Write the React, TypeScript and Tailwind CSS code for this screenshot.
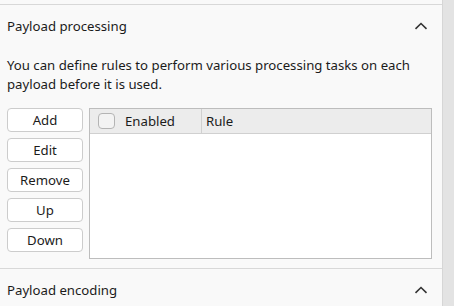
import React from "react";

const buttons = ["Add", "Edit", "Remove", "Up", "Down"];

function Chevron() {
  return (
    <svg width="14" height="8" viewBox="0 0 14 8" className="shrink-0">
      <path d="M1.5 6.8 L7 1.5 L12.5 6.8" fill="none" stroke="#333333" strokeWidth="1.6" />
    </svg>
  );
}

function SectionHeader({ title }: { title: string }) {
  return (
    <div className="flex h-[42px] items-center justify-between pl-[7px] pr-[14px]">
      <span className="pt-[2px]">{title}</span>
      <Chevron />
    </div>
  );
}

export default function App() {
  return (
    <div
      className="flex h-[306px] w-[454px] overflow-hidden bg-[#f9f9f9] text-[13.2px] text-[#1b1b1b]"
      style={{ fontFamily: '"Noto Sans", "Open Sans", sans-serif' }}
    >
      <div className="flex w-[442px] flex-col pt-1">
        <section className="border-t border-[#d8d8d8]">
          <SectionHeader title="Payload processing" />
          <div className="pl-[7px] pr-[10px]">
            <p className="mt-[9px] leading-[19px]">
              You can define rules to perform various processing tasks on each payload before it is used.
            </p>
            <div className="mt-[14px] flex gap-[6px]">
              <div className="flex w-[76px] flex-col gap-[6px]">
                {buttons.map((b) => (
                  <button
                    key={b}
                    className="h-6 rounded-[4px] border border-[#cccccc] bg-white pt-px leading-none text-[#1b1b1b]"
                  >
                    {b}
                  </button>
                ))}
              </div>
              <div className="flex h-[151px] flex-1 flex-col border border-[#bdbdbd] bg-white">
                <div className="flex h-[25px] items-stretch border-b border-[#d0d0d0] bg-[#ececec]">
                  <div className="flex w-[112px] items-center gap-[10px] border-r border-[#d0d0d0] pl-[8px]">
                    <span className="h-4 w-[17px] rounded-[4px] border border-[#b4b4b4] bg-[#f3f3f3]" />
                    <span className="pt-px">Enabled</span>
                  </div>
                  <div className="flex items-center pl-[4px] pt-px">Rule</div>
                </div>
              </div>
            </div>
          </div>
        </section>
        <section className="mt-[9px] border-t border-[#d8d8d8]">
          <SectionHeader title="Payload encoding" />
        </section>
      </div>
      <div className="w-3 border-l border-[#d6d6d6] bg-[#e3e3e3]" />
    </div>
  );
}
